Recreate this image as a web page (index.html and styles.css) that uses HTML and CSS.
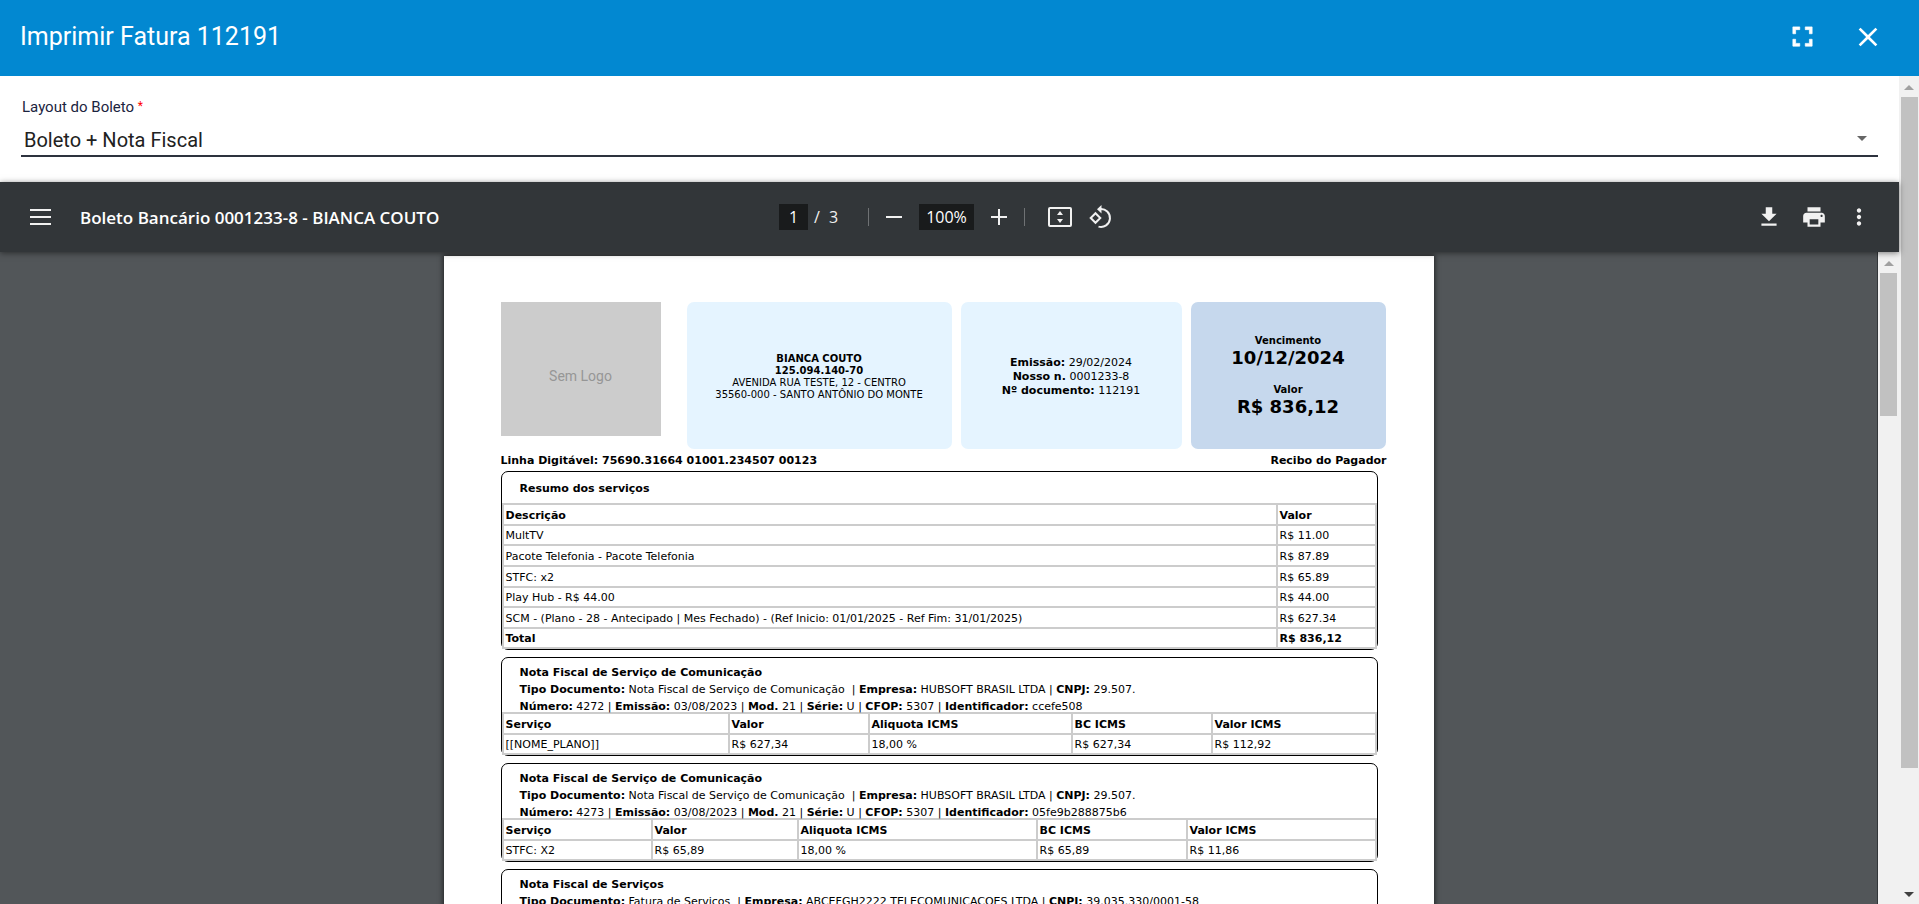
FILE: index.html
```html
<!DOCTYPE html>
<html lang="pt-BR">
<head>
    <meta charset="UTF-8">
    <meta name="viewport" content="width=device-width, initial-scale=1.0">
    <title>Imprimir Fatura 112191</title>
    <link rel="stylesheet" href="styles.css">
</head>
<body>
    <header class="dialog-header">
        <h1>Imprimir Fatura 112191</h1>
        <button type="button" class="header-btn" aria-label="Tela cheia">
            <svg width="33" height="33" viewBox="0 0 24 24" fill="#fff" stroke="#fff" stroke-width=".5"><path d="M7 14H5v5h5v-2H7v-3zm-2-4h2V7h3V5H5v5zm12 7h-3v2h5v-5h-2v3zM14 5v2h3v3h2V5h-5z"/></svg>
        </button>
        <button type="button" class="header-btn" aria-label="Fechar">
            <svg width="32" height="32" viewBox="0 0 24 24" fill="#fff"><path d="M19 6.41L17.59 5 12 10.59 6.41 5 5 6.41 10.59 12 5 17.59 6.41 19 12 13.41 17.59 19 19 17.59 13.41 12z"/></svg>
        </button>
    </header>

    <div class="dialog-body">
        <main class="dialog-content">
            <form class="layout-form">
                <label for="layout">Layout do Boleto <span class="required">*</span></label>
                <div class="select-wrap">
                    <select id="layout" name="layout">
                        <option>Boleto + Nota Fiscal</option>
                    </select>
                    <svg class="caret" width="10" height="5" viewBox="0 0 10 5" fill="#666"><path d="M0 0h10L5 5z"/></svg>
                </div>
            </form>

            <!-- PDF viewer -->
            <section class="viewer">
                <div class="toolbar">
                    <div class="toolbar-start">
                        <button type="button" class="tool-btn" aria-label="Menu">
                            <svg width="21" height="16" viewBox="0 0 21 16" fill="#f1f1f1"><path d="M0 0h21v2H0zM0 7h21v2H0zM0 14h21v2H0z"/></svg>
                        </button>
                        <span class="doc-title">Boleto Bancário 0001233-8 - BIANCA COUTO</span>
                    </div>
                    <div class="toolbar-center">
                        <input class="page-input" type="text" value="1" aria-label="Página">
                        <span class="page-total"><span>/</span><span>3</span></span>
                        <span class="divider"></span>
                        <button type="button" class="zoom-btn" aria-label="Diminuir zoom">
                            <svg width="16" height="16" viewBox="0 0 16 16" fill="#f1f1f1"><path d="M0 7h16v2H0z"/></svg>
                        </button>
                        <input class="zoom-input" type="text" value="100%" aria-label="Zoom">
                        <button type="button" class="zoom-btn" aria-label="Aumentar zoom">
                            <svg width="16" height="16" viewBox="0 0 16 16" fill="#f1f1f1"><path d="M7 0h2v7h7v2H9v7H7V9H0V7h7z"/></svg>
                        </button>
                        <span class="divider"></span>
                        <button type="button" class="fit-btn" aria-label="Ajustar à página">
                            <svg width="24" height="20" viewBox="0 0 24 20" fill="none"><rect x="1" y="1" width="22" height="18" rx="1" stroke="#f1f1f1" stroke-width="2"/><path d="M9 8l3-4 3 4zM9 12l3 4 3-4z" fill="#f1f1f1"/></svg>
                        </button>
                        <button type="button" class="tool-btn" aria-label="Girar">
                            <svg width="24" height="24" viewBox="0 0 24 24"><path fill="none" stroke="#f1f1f1" stroke-width="2" d="M7.500 8.200l4.800 4.800-4.800 4.800L2.700 13zM12 4a9 9 0 1 1-1.500 17.600"/><path fill="#f1f1f1" d="M13.500 0v8.500L9 4.200z"/></svg>
                        </button>
                    </div>
                    <div class="toolbar-end">
                        <button type="button" class="action-btn" aria-label="Baixar">
                            <svg width="26" height="26" viewBox="0 0 24 24" fill="#f1f1f1"><path d="M19 9h-4V3H9v6H5l7 7 7-7zM5 18v2h14v-2H5z"/></svg>
                        </button>
                        <button type="button" class="action-btn" aria-label="Imprimir">
                            <svg width="26" height="26" viewBox="0 0 24 24" fill="#f1f1f1"><path d="M19 8H5c-1.660 0-3 1.340-3 3v6h4v4h12v-4h4v-6c0-1.660-1.340-3-3-3zm-3 11H8v-5h8v5zm3-7c-.55 0-1-.45-1-1s.45-1 1-1 1 .45 1 1-.45 1-1 1zm-1-9H6v4h12V3z"/></svg>
                        </button>
                        <button type="button" class="action-btn" aria-label="Mais ações">
                            <svg width="26" height="26" viewBox="0 0 24 24" fill="#f1f1f1"><path d="M12 8c1.100 0 2-.9 2-2s-.9-2-2-2-2 .9-2 2 .9 2 2 2zm0 2c-1.100 0-2 .9-2 2s.9 2 2 2 2-.9 2-2-.9-2-2-2zm0 6c-1.100 0-2 .9-2 2s.9 2 2 2 2-.9 2-2-.9-2-2-2z"/></svg>
                        </button>
                    </div>
                </div>

                <div class="viewer-body">
                    <div class="canvas">
                        <article class="page">
                            <div class="summary">
                                <div class="logo">Sem Logo</div>
                                <div class="card customer">
                                    <b>BIANCA COUTO</b>
                                    <b>125.094.140-70</b>
                                    <span>AVENIDA RUA TESTE, 12 - CENTRO</span>
                                    <span>35560-000 - SANTO ANTÔNIO DO MONTE</span>
                                </div>
                                <div class="card issue">
                                    <span><b>Emissão:</b> 29/02/2024</span>
                                    <span><b>Nosso n.</b> 0001233-8</span>
                                    <span><b>Nº documento:</b> 112191</span>
                                </div>
                                <div class="card due">
                                    <span>Vencimento</span>
                                    <strong>10/12/2024</strong>
                                    <span>Valor</span>
                                    <strong>R$ 836,12</strong>
                                </div>
                            </div>

                            <div class="line">
                                <span>Linha Digitável: 75690.31664 01001.234507 00123</span>
                                <span>Recibo do Pagador</span>
                            </div>

                            <section class="box">
                                <h2 class="box-title">Resumo dos serviços</h2>
                                <table class="services">
                                    <thead>
                                        <tr><th>Descrição</th><th class="price">Valor</th></tr>
                                    </thead>
                                    <tbody>
                                        <tr><td>MultTV</td><td>R$ 11.00</td></tr>
                                        <tr><td>Pacote Telefonia - Pacote Telefonia</td><td>R$ 87.89</td></tr>
                                        <tr><td>STFC: x2</td><td>R$ 65.89</td></tr>
                                        <tr><td>Play Hub - R$ 44.00</td><td>R$ 44.00</td></tr>
                                        <tr><td>SCM - (Plano - 28 - Antecipado | Mes Fechado) - (Ref Inicio: 01/01/2025 - Ref Fim: 31/01/2025)</td><td>R$ 627.34</td></tr>
                                    </tbody>
                                    <tfoot>
                                        <tr><th>Total</th><th>R$ 836,12</th></tr>
                                    </tfoot>
                                </table>
                            </section>

                            <section class="box">
                                <div class="invoice-info">
                                    <h2>Nota Fiscal de Serviço de Comunicação</h2>
                                    <p><b>Tipo Documento:</b> Nota Fiscal de Serviço de Comunicação &nbsp;| <b>Empresa:</b> HUBSOFT BRASIL LTDA | <b>CNPJ:</b> 29.507.</p>
                                    <p><b>Número:</b> 4272 | <b>Emissão:</b> 03/08/2023 | <b>Mod.</b> 21 | <b>Série:</b> U | <b>CFOP:</b> 5307 | <b>Identificador:</b> ccefe508</p>
                                </div>
                                <table class="invoice plan">
                                    <colgroup><col class="c1"><col class="c2"><col class="c3"><col class="c4"><col></colgroup>
                                    <thead>
                                        <tr><th>Serviço</th><th>Valor</th><th>Aliquota ICMS</th><th>BC ICMS</th><th>Valor ICMS</th></tr>
                                    </thead>
                                    <tbody>
                                        <tr><td>[[NOME_PLANO]]</td><td>R$ 627,34</td><td>18,00 %</td><td>R$ 627,34</td><td>R$ 112,92</td></tr>
                                    </tbody>
                                </table>
                            </section>

                            <section class="box">
                                <div class="invoice-info">
                                    <h2>Nota Fiscal de Serviço de Comunicação</h2>
                                    <p><b>Tipo Documento:</b> Nota Fiscal de Serviço de Comunicação &nbsp;| <b>Empresa:</b> HUBSOFT BRASIL LTDA | <b>CNPJ:</b> 29.507.</p>
                                    <p><b>Número:</b> 4273 | <b>Emissão:</b> 03/08/2023 | <b>Mod.</b> 21 | <b>Série:</b> U | <b>CFOP:</b> 5307 | <b>Identificador:</b> 05fe9b288875b6</p>
                                </div>
                                <table class="invoice phone">
                                    <colgroup><col class="c1"><col class="c2"><col class="c3"><col class="c4"><col></colgroup>
                                    <thead>
                                        <tr><th>Serviço</th><th>Valor</th><th>Aliquota ICMS</th><th>BC ICMS</th><th>Valor ICMS</th></tr>
                                    </thead>
                                    <tbody>
                                        <tr><td>STFC: X2</td><td>R$ 65,89</td><td>18,00 %</td><td>R$ 65,89</td><td>R$ 11,86</td></tr>
                                    </tbody>
                                </table>
                            </section>

                            <section class="box">
                                <div class="invoice-info">
                                    <h2>Nota Fiscal de Serviços</h2>
                                    <p><b>Tipo Documento:</b> Fatura de Serviços &nbsp;| <b>Empresa:</b> ABCEFGH2222 TELECOMUNICACOES LTDA | <b>CNPJ:</b> 39.035.330/0001-58</p>
                                </div>
                            </section>
                        </article>
                    </div>
                    <div class="scrollbar inner">
                        <svg class="arrow" width="10" height="5" viewBox="0 0 10 5" fill="#a0a0a0"><path d="M0 5h10L5 0z"/></svg>
                        <div class="thumb"></div>
                    </div>
                </div>
            </section>
        </main>
        <div class="scrollbar outer">
            <svg class="arrow" width="10" height="5" viewBox="0 0 10 5" fill="#a0a0a0"><path d="M0 5h10L5 0z"/></svg>
            <div class="thumb"></div>
            <svg class="arrow down" width="10" height="5" viewBox="0 0 10 5" fill="#404040"><path d="M0 0h10L5 5z"/></svg>
        </div>
    </div>
</body>
</html>
```
FILE: styles.css
```css
* {
    box-sizing: border-box;
}
body {
    margin: 0;
    height: 100vh;
    display: flex;
    flex-direction: column;
    overflow: hidden;
    font-family: Roboto, sans-serif;
    background: #fff;
}
h1, h2, p {
    margin: 0;
}
button {
    display: flex;
    align-items: center;
    justify-content: center;
    padding: 0;
    border: none;
    background: none;
    cursor: pointer;
}

/* Dialog header */
.dialog-header {
    display: flex;
    align-items: center;
    flex: none;
    height: 76px;
    padding: 0 19px 3px 20px;
    background: #0288d1;
    color: #fff;
}
.dialog-header h1 {
    flex: 1;
    font-size: 25px;
    font-weight: 400;
}
.header-btn {
    width: 65px;
    height: 48px;
}

.dialog-body {
    display: flex;
    flex: 1;
    min-height: 0;
}
.dialog-content {
    display: flex;
    flex-direction: column;
    flex: 1;
    min-width: 0;
}

/* Layout select */
.layout-form {
    flex: none;
    padding: 20px 21px 25px;
}
.layout-form label {
    display: block;
    padding-left: 1px;
    font-size: 15px;
    line-height: 22px;
    color: #1b2440;
}
.required {
    font-size: 12px;
    vertical-align: 2px;
    line-height: 1;
    color: #f00;
}
.select-wrap {
    display: flex;
    align-items: center;
    border-bottom: 2px solid #2d323e;
}
.select-wrap select {
    flex: 1;
    height: 37px;
    padding: 6px 3px 0;
    border: none;
    appearance: none;
    background: transparent;
    font-family: Roboto, sans-serif;
    font-size: 20px;
    color: #212121;
}
.caret {
    margin: 4px 11px 0 0;
}

/* Viewer toolbar */
.viewer {
    display: flex;
    flex-direction: column;
    flex: 1;
    min-height: 0;
    font-family: "Open Sans", sans-serif;
}
.toolbar {
    display: grid;
    grid-template-columns: 1fr auto 1fr;
    align-items: center;
    flex: none;
    height: 70px;
    background: #323639;
    color: #f1f1f1;
    z-index: 1;
    box-shadow: 0 1px 6px rgba(0, 0, 0, 0.5);
}
.toolbar-start, .toolbar-center, .toolbar-end {
    display: flex;
    align-items: center;
}
.toolbar-start {
    padding-left: 20px;
    gap: 20px;
}
.toolbar-end {
    justify-content: flex-end;
    padding-right: 18px;
}
.doc-title {
    font-size: 17px;
    font-weight: 600;
    color: #fff;
}
.tool-btn, .fit-btn {
    width: 40px;
    height: 40px;
}
.fit-btn {
    margin-left: 15px;
}
.zoom-btn {
    width: 50px;
    height: 40px;
}
.action-btn {
    width: 45px;
    height: 40px;
}
.page-input, .zoom-input {
    height: 26px;
    padding: 0;
    border: none;
    background: #191b1c;
    color: #fff;
    font-family: "Open Sans", sans-serif;
    font-size: 16px;
    text-align: center;
}
.page-input {
    width: 29px;
}
.zoom-input {
    width: 55px;
}
.page-total {
    display: flex;
    gap: 9px;
    width: 60px;
    padding-left: 6px;
    font-size: 16px;
}
.divider {
    width: 1px;
    height: 18px;
    background: #6f7274;
}

.viewer-body {
    display: flex;
    flex: 1;
    min-height: 0;
}
.canvas {
    flex: 1;
    overflow: hidden;
    padding-top: 4px;
    background: #525659;
    border-right: 1px solid #323639;
}

/* Document page */
.page {
    width: 990px;
    min-height: 1400px;
    margin: 0 auto;
    padding: 46px 47px 0 57px;
    background: #fff;
    color: #000;
    box-shadow: 0 0 5px 1px rgba(0, 0, 0, 0.6);
    font-family: "DejaVu Sans", Verdana, sans-serif;
    font-size: 11px;
}
.summary {
    display: flex;
    align-items: flex-start;
    gap: 9px;
}
.logo {
    display: flex;
    align-items: center;
    justify-content: center;
    width: 160px;
    height: 134px;
    margin-right: 17px;
    padding-top: 14px;
    background: #ccc;
    color: #969696;
    font-family: Roboto, sans-serif;
    font-size: 14px;
}
.card {
    display: flex;
    flex-direction: column;
    align-items: center;
    justify-content: center;
    height: 147px;
    padding-top: 2px;
    border-radius: 7px;
    background: #e5f4ff;
}
.customer {
    width: 265px;
    font-size: 10px;
    line-height: 12px;
}
.issue {
    width: 221px;
    line-height: 14px;
}
.due {
    width: 195px;
    background: #c6d8ed;
    font-size: 10px;
    font-weight: 700;
    line-height: 12px;
}
.due strong {
    font-size: 18px;
    line-height: 22px;
}
.due strong + span {
    margin-top: 15px;
}
.line {
    display: flex;
    justify-content: space-between;
    padding-top: 2px;
    font-weight: 700;
    line-height: 20px;
}

.box {
    margin: 0 9px 7px 0;
    border: 1px solid #000;
    border-radius: 7px;
}
.box h2 {
    font-size: 11px;
    font-weight: 700;
}
.box-title {
    padding: 2px 0 0 18px;
    line-height: 29px;
}
.invoice-info {
    padding: 6px 0 0 18px;
    line-height: 17px;
    white-space: nowrap;
}
table {
    width: 100%;
    table-layout: fixed;
    border-collapse: collapse;
}
th, td {
    height: 21px;
    padding: 2px 2px 0;
    border: 2px solid #ccc;
    font-weight: 400;
    line-height: 16px;
    text-align: left;
}
th {
    font-weight: 700;
}
.services tbody tr:nth-child(3n + 1) td,
.services tfoot th,
.invoice td {
    height: 20px;
}
.price {
    width: 99px;
}
.invoice {
    margin-top: -3px;
}
.plan .c1 { width: 226px; }
.plan .c2 { width: 140px; }
.plan .c3 { width: 203px; }
.plan .c4 { width: 140px; }
.phone .c1 { width: 149px; }
.phone .c2 { width: 146px; }
.phone .c3 { width: 239px; }
.phone .c4 { width: 150px; }

/* Scrollbars */
.scrollbar {
    display: flex;
    flex-direction: column;
    align-items: center;
    flex: none;
    width: 20px;
    background: #f1f1f1;
}
.scrollbar.inner {
    width: 21px;
}
.scrollbar .arrow {
    flex: none;
    margin: 9px 0 7px;
}
.scrollbar .down {
    margin: auto 0 7px;
}
.scrollbar .thumb {
    width: 17px;
    background: #c1c1c1;
}
.outer .thumb {
    height: 81%;
}
.inner .thumb {
    height: 22%;
}
```
